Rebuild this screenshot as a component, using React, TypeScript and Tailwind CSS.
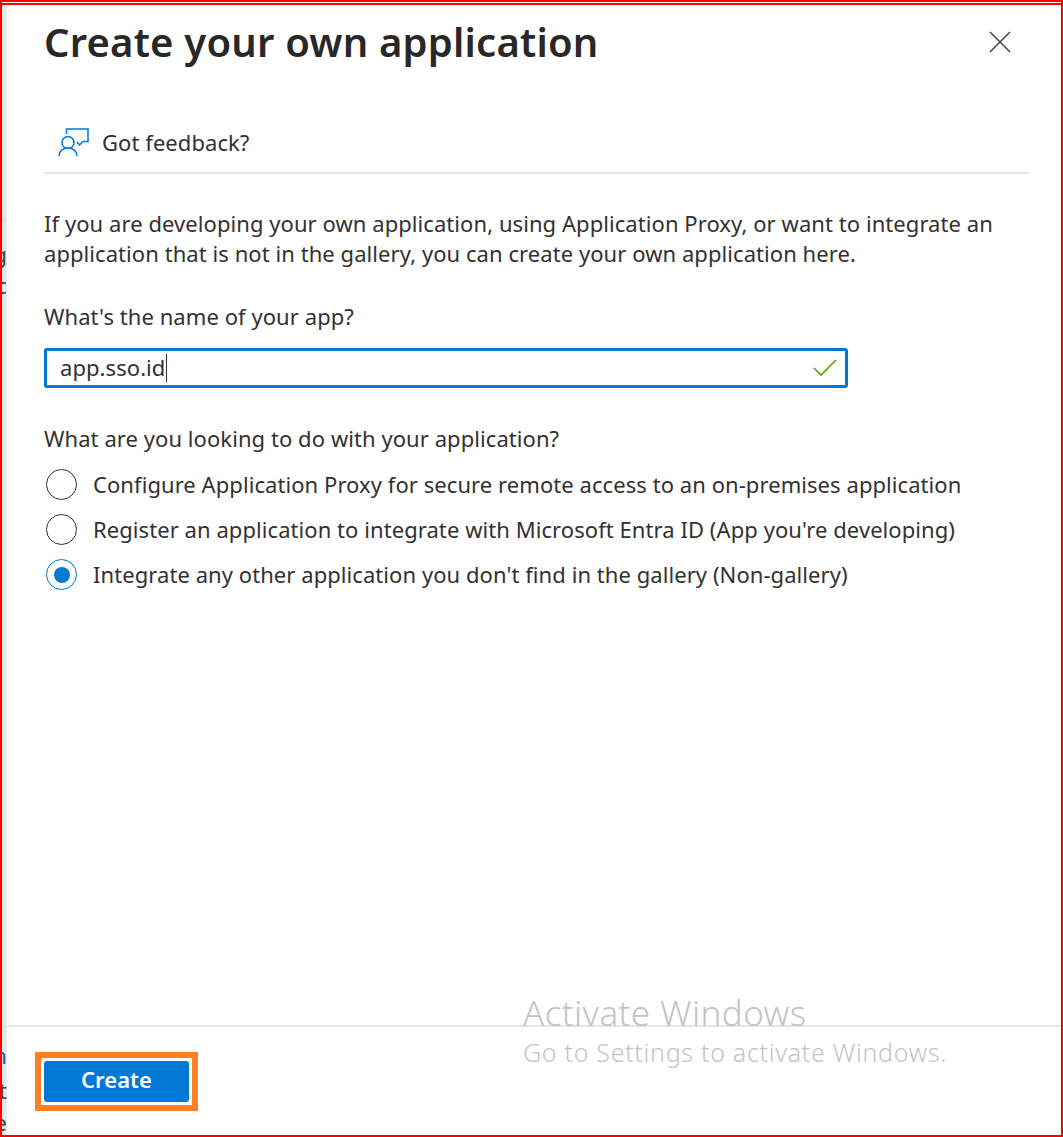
const font = "font-['Noto_Sans',sans-serif]";

function FeedbackIcon() {
  return (
    <svg width="32" height="30" viewBox="0 0 32 30" fill="none" stroke="#0078d4" strokeWidth="1.5">
      <path d="M8.500 6V1h21.500v12.500h-5l-3.500 3.500-2.500-3" />
      <circle cx="10" cy="14.500" r="6" />
      <path d="M1 28c0-5 4-8 9-8s9 3 9 8" />
    </svg>
  );
}

function Radio({ label, checked }: { label: string; checked?: boolean }) {
  return (
    <div className="flex h-[45px] items-center">
      <div
        className={
          checked
            ? "ml-[2px] flex h-[31px] w-[31px] items-center justify-center rounded-full border-[1.5px] border-[#0078d4]"
            : "ml-[2px] flex h-[31px] w-[31px] items-center justify-center rounded-full border-[1.5px] border-[#323130]"
        }
      >
        {checked && <div className="h-[16px] w-[16px] rounded-full bg-[#0078d4]" />}
      </div>
      <span className="ml-[16px] whitespace-nowrap">{label}</span>
    </div>
  );
}

export default function App() {
  return (
    <div className={`relative flex h-[1137px] w-[1063px] flex-col border-2 border-[#ff0000] bg-white text-[22px] tracking-[0.065px] text-[#323130] ${font}`}>
      <div className="h-[1px] bg-white" />
      <div className="h-[2px] bg-[#ff0000]" />
      <div className="flex min-h-0 flex-1">
        {/* Blade behind the panel */}
        <div className="flex w-[5px] shrink-0 flex-col items-end overflow-hidden bg-[#e8e8e8] text-[22px] leading-[28px] text-[#444]">
          <div className="mt-[215px] h-[1px] w-full shrink-0 bg-[#d8d8d8]" />
          <div className="mt-[19px] shrink-0">g</div>
          <div className="mt-[3px] shrink-0">c</div>
          <div className="mt-[616px] h-[1px] w-full shrink-0 bg-[#f2f2f2]" />
          <div className="mt-[125px] shrink-0 text-[#0f5cab]">n</div>
          <div className="mt-[7px] shrink-0">t</div>
          <div className="mt-[4px] shrink-0">e</div>
        </div>

        {/* Panel */}
        <div className="flex min-w-0 flex-1 flex-col">
          <div className="flex flex-1 flex-col pl-[37px] pr-[32px]">
            <div className="flex h-[74px] items-center justify-between">
              <h1 className="whitespace-nowrap text-[40px] font-semibold tracking-[0.2px] text-[#292827]">Create your own application</h1>
              <svg className="mr-[17px]" width="24" height="22" viewBox="0 0 24 22" fill="none" stroke="#444" strokeWidth="1.5">
                <path d="M2 1l20 20M22 1L2 21" />
              </svg>
            </div>
            <div className="mt-[34px] flex h-[61px] items-center border-b-2 border-[#e5e5e5] pl-[14px]">
              <FeedbackIcon />
              <span className="ml-[12px]">Got feedback?</span>
            </div>
            <p className="mt-[34px] leading-[30px]">
              If you are developing your own application, using Application Proxy, or want to integrate an application that is not in the gallery, you can create your own application here.
            </p>
            <div className="mt-[33px] leading-[30px]">What's the name of your app?</div>
            <div className="mt-[17px] flex h-[40px] w-[804px] items-center justify-between rounded-[3px] border-[3px] border-[#0078d4] pb-[1px] pl-[13px] pr-[8px]">
              <span className="flex items-center">
                app.sso.id
                <span className="ml-[1px] h-[28px] w-[1px] bg-[#323130]" />
              </span>
              <svg width="24" height="18" viewBox="0 0 24 18" fill="none" stroke="#57a300" strokeWidth="1.6">
                <path d="M1 9l7 7L23 1" />
              </svg>
            </div>
            <div className="mt-[35px] leading-[30px]">What are you looking to do with your application?</div>
            <div className="mt-[9px] flex flex-col">
              <Radio label="Configure Application Proxy for secure remote access to an on-premises application" />
              <Radio label="Register an application to integrate with Microsoft Entra ID (App you're developing)" />
              <Radio label="Integrate any other application you don't find in the gallery (Non-gallery)" checked />
            </div>
          </div>

          {/* Footer */}
          <div className="flex h-[110px] shrink-0 items-start border-t-2 border-[#e5e5e5]">
            <div className="ml-[28px] mt-[25px] border-[6px] border-[#ff7f27] bg-white p-[3px]">
              <div className="flex h-[41px] w-[145px] items-center justify-center rounded-[3px] bg-[#0078d4] pb-[4px] font-semibold text-white">Create</div>
            </div>
          </div>
        </div>
      </div>

      {/* Windows watermark, sits over the footer border */}
      <div className="pointer-events-none absolute left-[521px] top-[989px] font-light text-[#c4c4c4]">
        <div className="text-[35px] leading-[44px] tracking-[0.4px]">Activate Windows</div>
        <div className="mt-[1px] text-[25px] leading-[32px] tracking-[0.7px]">Go to Settings to activate Windows.</div>
      </div>
    </div>
  );
}
